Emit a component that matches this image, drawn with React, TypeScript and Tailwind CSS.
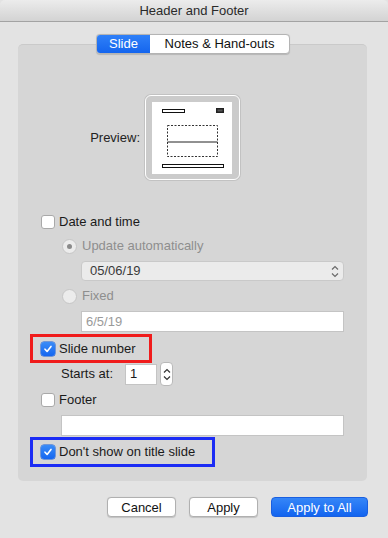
import React from "react";

const FONT = { fontFamily: '"Liberation Sans", Arial, sans-serif' };

function Checkbox({ checked }: { checked?: boolean }) {
  if (checked) {
    return (
      <span className="flex h-[14px] w-[14px] shrink-0 items-center justify-center rounded-[3px] bg-gradient-to-b from-[#3b8cf7] to-[#1566f0] shadow-[0_0_0_0.5px_#1158d6]">
        <svg width="10" height="10" viewBox="0 0 10 10">
          <path d="M2 5.2 L4.1 7.4 L8 2.4" fill="none" stroke="white" strokeWidth="1.6" strokeLinecap="round" strokeLinejoin="round" />
        </svg>
      </span>
    );
  }
  return <span className="h-[14px] w-[14px] shrink-0 rounded-[3px] border border-[#a9a9a9] bg-white" />;
}

function Radio({ selected }: { selected?: boolean }) {
  return (
    <span className="flex h-[15px] w-[15px] shrink-0 items-center justify-center rounded-full border border-[#c6c6c6] bg-[#ececec]">
      {selected && <span className="h-[5px] w-[5px] rounded-full bg-[#8a8a8a]" />}
    </span>
  );
}

function Chevrons({ color = "#555" }: { color?: string }) {
  return (
    <svg width="8" height="13" viewBox="0 0 8 13">
      <path d="M1 4.5 L4 1.5 L7 4.5" fill="none" stroke={color} strokeWidth="1.2" />
      <path d="M1 8.5 L4 11.5 L7 8.5" fill="none" stroke={color} strokeWidth="1.2" />
    </svg>
  );
}

function SlidePreview() {
  return (
    <svg width="80" height="72" viewBox="0 0 80 72">
      <rect x="10.5" y="7.5" width="22" height="3" fill="none" stroke="#111" strokeWidth="1" />
      <rect x="64" y="6" width="8" height="5" fill="#222" />
      <rect x="65.5" y="7.5" width="5" height="2" fill="#555" />
      <rect x="15.5" y="23.5" width="50" height="31" fill="none" stroke="#333" strokeWidth="1" strokeDasharray="2 1.5" />
      <line x1="15.5" y1="40" x2="65.5" y2="40" stroke="#222" strokeWidth="1" />
      <rect x="10.5" y="62.5" width="61" height="3" fill="none" stroke="#111" strokeWidth="1" />
    </svg>
  );
}

export default function App() {
  return (
    <div className="relative h-[538px] w-[388px] overflow-hidden bg-[#e3e3e3] text-[13px] text-[#1a1a1a]" style={FONT}>
      {/* Title bar */}
      <div className="flex h-[22px] items-center justify-center rounded-t-[5px] border-b border-[#a3a3a3] bg-gradient-to-b from-[#ececec] to-[#d3d3d3] text-[13px] text-[#2a2a2a]">
        Header and Footer
      </div>

      {/* Tabs */}
      <div className="relative z-10 mt-[12px] flex justify-center">
        <div className="ml-[-2px] flex h-[20px] overflow-hidden rounded-[4px] border border-[#b4b4b4] bg-white shadow-[0_0.5px_1px_rgba(0,0,0,0.15)]">
          <div className="flex w-[53px] items-center justify-center bg-gradient-to-b from-[#2f80f8] to-[#1465ee] text-white">Slide</div>
          <div className="flex w-[139px] items-center justify-center text-[#111]">Notes &amp; Hand-outs</div>
        </div>
      </div>

      {/* Group box */}
      <div className="ml-[18px] mt-[-10px] flex h-[437px] w-[349px] flex-col rounded-[5px] border-t border-[#cacaca] bg-[#d6d6d6]">
        {/* Preview */}
        <div className="mt-[50px] flex items-center">
          <div className="w-[127px] pr-[5px] text-right text-[#222]">Preview:</div>
          <div className="rounded-[6px] border border-white bg-[#cbcbcb] p-[6px] pb-[5px] pr-[7px] shadow-[0_0_0_1px_#c2c2c2]">
            <div className="h-[72px] w-[80px] bg-white">
              <SlidePreview />
            </div>
          </div>
        </div>

        {/* Date and time */}
        <div className="ml-[23px] mt-[33px] flex h-[18px] items-center gap-[4px]">
          <Checkbox />
          <span>Date and time</span>
        </div>
        <div className="ml-[44px] mt-[6px] flex h-[18px] items-center gap-[5px] text-[#8e8e8e]">
          <Radio selected />
          <span>Update automatically</span>
        </div>
        <div className="ml-[63px] mt-[6px] flex h-[20px] w-[263px] items-center justify-between rounded-[4px] border border-[#c9c9c9] bg-[#ebebeb] pl-[8px] pr-[4px] text-[#3a3a3a]">
          <span>05/06/19</span>
          <Chevrons color="#6a6a6a" />
        </div>
        <div className="ml-[44px] mt-[6px] flex h-[18px] items-center gap-[5px] text-[#8e8e8e]">
          <Radio />
          <span>Fixed</span>
        </div>
        <div className="ml-[63px] mt-[6px] flex h-[21px] w-[263px] items-center border border-[#c4c4c4] bg-white pl-[4px] text-[#9a9a9a]">
          6/5/19
        </div>

        {/* Slide number */}
        <div className="ml-[12px] mt-[2px] flex h-[29px] w-[122px] items-center gap-[4px] border-[3px] border-[#f01c1c] pl-[8px]">
          <Checkbox checked />
          <span>Slide number</span>
        </div>
        <div className="ml-[43px] flex h-[22px] items-center">
          <span className="w-[64px]">Starts at:</span>
          <div className="flex h-[21px] w-[32px] items-center border border-[#c4c4c4] bg-white pl-[4px]">1</div>
          <div className="ml-[3px] flex h-[24px] w-[13px] items-center justify-center rounded-[4px] border border-[#b9b9b9] bg-white">
            <Chevrons color="#333" />
          </div>
        </div>

        {/* Footer */}
        <div className="ml-[23px] mt-[6px] flex h-[18px] items-center gap-[4px]">
          <Checkbox />
          <span>Footer</span>
        </div>
        <div className="ml-[43px] mt-[6px] h-[21px] w-[283px] border border-[#c4c4c4] bg-white" />

        {/* Don't show on title slide */}
        <div className="ml-[12px] mt-[1px] flex h-[30px] w-[185px] items-center gap-[4px] border-[3px] border-[#1b2cf5] pl-[8px]">
          <Checkbox checked />
          <span>Don&apos;t show on title slide</span>
        </div>
      </div>

      {/* Buttons */}
      <div className="mt-[16px] flex justify-end gap-[13px] pr-[20px]">
        <button className="h-[20px] w-[69px] rounded-[4px] border border-[#b0b0b0] bg-white text-[#111] shadow-[0_0.5px_1px_rgba(0,0,0,0.15)]">Cancel</button>
        <button className="h-[20px] w-[69px] rounded-[4px] border border-[#b0b0b0] bg-white text-[#111] shadow-[0_0.5px_1px_rgba(0,0,0,0.15)]">Apply</button>
        <button className="h-[20px] w-[97px] rounded-[4px] border border-[#1a5fe0] bg-gradient-to-b from-[#3586f8] to-[#1264ef] text-white">Apply to All</button>
      </div>
    </div>
  );
}
